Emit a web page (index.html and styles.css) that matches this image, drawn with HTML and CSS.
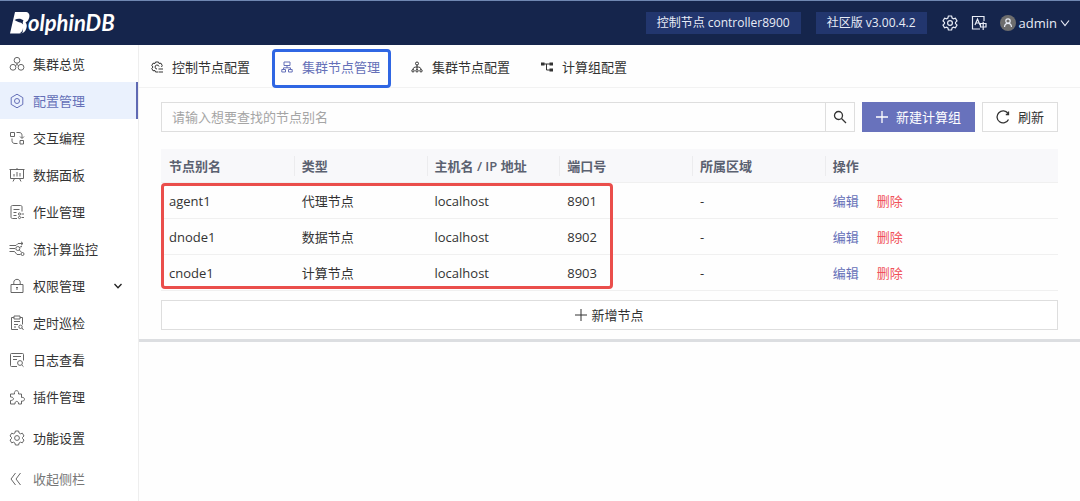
FILE: index.html
```html
<!doctype html>
<html lang="zh-CN">
<head>
	<meta charset="UTF-8">
	<title>DolphinDB</title>
	<link rel="stylesheet" href="styles.css">
</head>
<body>

	<header class="topbar">
		<a class="logo" href="#" aria-label="DolphinDB">
			<svg class="logo-mark" viewBox="0 0 20 22" width="20" height="22">
				<path fill="#fff" d="M5 0h10c3.500 0 5 2 4.300 5.200-.6 2.600-1.800 4.200-3.800 5.300 1.500 1.500 1.600 3.500.8 6-1 3.300-3.200 5-6.800 5H0z"/>
				<path fill="#15254c" d="M4.500 8c3-1.800 6.500-1.800 9 .5-1 1.500-.8 2.500-.3 4-1.700-1.600-2.700-2-4.200-2.200C7.500 9.500 6 9 4.500 8zM9.500 21.500c2.500-1.500 3.500-3.500 3.500-5.500 0 0 .5 3-1 5.500z"/>
			</svg>
			<span class="logo-text">olphinDB</span>
		</a>
		<div class="status">
			<span class="tag">控制节点 controller8900</span>
			<span class="tag">社区版 v3.00.4.2</span>
		</div>
		<button class="top-btn" aria-label="设置">
			<svg viewBox="0 0 16 16" width="16" height="16"><path d="M6.400 1h3.200l.5 2 1.300.8 2-.6L15 6l-1.500 1.400v1.200L15 10l-1.600 2.800-2-.6-1.300.8-.5 2H6.400l-.5-2-1.300-.8-2 .6L1 10l1.500-1.400V7.400L1 6l1.600-2.800 2 .6L5.900 3z"/><circle cx="8" cy="8" r="2.400"/></svg>
		</button>
		<button class="top-btn" aria-label="语言">
			<svg viewBox="0 0 16 16" width="16" height="16"><path d="M13 6V1.500H1.500v12.500H9M4 10l2.500-6L9 10M5 8h3M9.500 8.500h5.500v3.500H9.500zM12.200 6.800V15"/></svg>
		</button>
		<button class="user">
			<span class="avatar"><svg viewBox="0 0 16 16" width="16" height="16"><circle cx="8" cy="6" r="2.200"/><path d="M4.500 12c.2-2.400 1.500-3.600 3.500-3.600s3.300 1.200 3.500 3.600"/></svg></span>
			admin
			<svg viewBox="0 0 10 10" width="10" height="10"><path d="M1 2.500l4 5 4-5"/></svg>
		</button>
	</header>

	<div class="layout">
		<nav class="sidebar">
			<a class="side-item" href="#"><svg viewBox="0 0 16 16"><circle cx="8" cy="4.300" r="2.900"/><circle cx="4" cy="11.300" r="2.900"/><circle cx="12" cy="11.300" r="2.900"/><path d="M8 7.200v1.300l-1.500 1M8 8.500l1.500 1"/></svg>集群总览</a>
			<a class="side-item active" href="#"><svg viewBox="0 0 16 16"><path d="M8 1.200l5.800 3.400v6.800L8 14.800l-5.800-3.400V4.600z"/><circle cx="8" cy="8" r="2.500"/></svg>配置管理</a>
			<a class="side-item" href="#"><svg viewBox="0 0 16 16"><path d="M1.500 2.500h4v4h-4zM11 10.500h3.500V14H11zM7.500 2.500H10c2 0 3 1 3 3V8M11 6.500l2 2 2-2M8.500 13.500H6c-2 0-3-1-3-3V8.500"/></svg>交互编程</a>
			<a class="side-item" href="#"><svg viewBox="0 0 16 16"><path d="M.5 2.500h15M1.500 2.500v9h13v-9M5 9.500V7M8 9.500V5M11 9.500V6M5.500 11.500L4 14.500M10.500 11.500l1.500 3M8 1v1.500"/></svg>数据面板</a>
			<a class="side-item" href="#"><svg viewBox="0 0 16 16"><path d="M8 14.500H3.500c-1 0-1.500-.5-1.500-1.500V3c0-1 .5-1.500 1.500-1.500h8c1 0 1.500.5 1.500 1.500v4.500M4.500 5.500h6M4.500 8.500h3M4.500 11.500h3M12.500 10H15M12.500 13.500H15"/><circle cx="10.500" cy="10" r="1.100"/><circle cx="10.500" cy="13.500" r="1.100"/></svg>作业管理</a>
			<a class="side-item" href="#"><svg viewBox="0 0 16 16"><path d="M.5 4.500h6.500L9 2.500h5M12 .8l2 1.700-2 1.700M.5 7.500H6M.5 10.500h5l2.500 3h3.500"/><circle cx="8.800" cy="7.500" r="2"/><path d="M10.300 9l2.500 2.500M11 6l2-.5"/><circle cx="13.500" cy="13" r="1.500"/></svg>流计算监控</a>
			<a class="side-item" href="#"><svg viewBox="0 0 16 16"><path d="M2 6.500h12v8H2zM4.800 6.500V4.200c0-3.800 6.400-3.800 6.400 0v2.300M8 9v3M7 9.500h2"/></svg>权限管理<svg class="caret" viewBox="0 0 10 10"><path d="M1.500 3L5 6.800 8.500 3"/></svg></a>
			<a class="side-item" href="#"><svg viewBox="0 0 16 16"><path d="M9 14.500H2.500V2.500H5M11 2.500h2.500v7M5 1h6v3H5zM5 6.500h6M5 9.500h4M5 12h2M13 13l1.500 2"/><circle cx="11.500" cy="11.800" r="1.700"/></svg>定时巡检</a>
			<a class="side-item" href="#"><svg viewBox="0 0 16 16"><path d="M8 14.500H2.500c-.7 0-1-.3-1-1v-11c0-.7.3-1 1-1h11c.7 0 1 .3 1 1v6M4 4.500h8M4 7.500h4M12.800 13l1.700 1.700"/><circle cx="11" cy="11" r="2.400"/></svg>日志查看</a>
			<a class="side-item" href="#"><svg viewBox="0 0 16 16"><path d="M1.500 5H5.500c-1-4.500 5-4.500 4 0h3v3.500c4-1 4 4.500 0 3.500v3H9.500c.5-3.500-4-3.500-3.500 0H1.500v-3.500c4 0 4-3.500 0-3.500z"/></svg>插件管理</a>
			<a class="side-item spaced" href="#"><svg viewBox="0 0 16 16"><path d="M6.400 1h3.200l.5 2 1.300.8 2-.6L15 6l-1.500 1.400v1.200L15 10l-1.600 2.800-2-.6-1.300.8-.5 2H6.400l-.5-2-1.300-.8-2 .6L1 10l1.500-1.400V7.400L1 6l1.600-2.800 2 .6L5.900 3z"/><circle cx="8" cy="8" r="2.400"/></svg>功能设置</a>
			<button class="side-item spaced collapse"><svg viewBox="0 0 16 16"><path d="M6.500 2L2 8l4.500 6M11.500 2L7 8l4.500 6"/></svg>收起侧栏</button>
		</nav>

		<main class="main">
			<div class="tabs">
				<a class="tab" href="#"><svg viewBox="0 0 12 12"><path d="M7 11H4.500L4 9.500 2 9.800.8 7.500 2 6 .8 4.500 2 2.200l2 .3L4.500 1h3L8 2.500l2-.3 1.200 2.300L10.500 6M8 5.500A2 2 0 1 0 6 8M7.500 8H12M7.500 11H12"/></svg>控制节点配置</a>
				<a class="tab current" href="#"><svg viewBox="0 0 12 12"><path d="M3 1h6v3.500H3zM6 4.500V7M2.500 8.500V6.800h7v1.700M.8 8.500h3.700V11H.8zM7.500 8.500h3.700V11H7.500z"/></svg>集群节点管理</a>
				<a class="tab" href="#"><svg viewBox="0 0 12 12"><circle cx="6" cy="2.500" r="1.500"/><path d="M6 4v5M2 8.500C2 6.500 3.500 6 6 6s4 .5 4 2.500"/><circle cx="2" cy="9.800" r="1.200"/><circle cx="6" cy="9.800" r="1.200"/><circle cx="10" cy="9.800" r="1.200"/></svg>集群节点配置</a>
				<a class="tab" href="#"><svg viewBox="0 0 12 12"><path d="M1 3h10M5.500 3v6H11"/><path class="solid" d="M0 1.500h3.500v3H0zM8.500 1.500H12v3H8.500zM8.500 7.500H12v3H8.500z"/></svg>计算组配置</a>
			</div>

			<section class="content">
				<div class="toolbar">
					<form class="search">
						<input class="search-input" type="text" aria-label="节点别名" placeholder="请输入想要查找的节点别名">
						<button class="search-btn" type="button" aria-label="查找"><svg viewBox="0 0 14 14" width="14" height="14"><circle cx="5.500" cy="5.500" r="4"/><path d="M8.500 8.500l4.500 4.500"/></svg></button>
					</form>
					<button class="btn primary"><svg viewBox="0 0 12 12" width="12" height="12"><path d="M6 0v12M0 6h12"/></svg>新建计算组</button>
					<button class="btn"><svg viewBox="0 0 14 14" width="14" height="14"><path d="M12 3.500A6 6 0 1 0 12.500 9.500M12.500 1.500v3H9.800"/></svg>刷新</button>
				</div>

				<div class="table-wrap">
					<table class="nodes">
						<thead>
							<tr><th>节点别名</th><th>类型</th><th>主机名 / IP 地址</th><th>端口号</th><th>所属区域</th><th class="actions">操作</th></tr>
						</thead>
						<tbody>
							<tr><td>agent1</td><td>代理节点</td><td>localhost</td><td>8901</td><td>-</td><td><a class="edit" href="#">编辑</a><a class="delete" href="#">删除</a></td></tr>
							<tr><td>dnode1</td><td>数据节点</td><td>localhost</td><td>8902</td><td>-</td><td><a class="edit" href="#">编辑</a><a class="delete" href="#">删除</a></td></tr>
							<tr><td>cnode1</td><td>计算节点</td><td>localhost</td><td>8903</td><td>-</td><td><a class="edit" href="#">编辑</a><a class="delete" href="#">删除</a></td></tr>
						</tbody>
					</table>
					<div class="highlight"></div>
				</div>

				<button class="btn add"><svg viewBox="0 0 12 12" width="12" height="12"><path d="M6 0v12M0 6h12"/></svg>新增节点</button>
			</section>
		</main>
	</div>

</body>
</html>
```
FILE: styles.css
```css
* {
	box-sizing: border-box;
}
html, body {
	height: 100%;
	margin: 0;
}
body {
	display: flex;
	flex-direction: column;
	background-color: #fefefe;
	color: #333;
	font-family: "Open Sans", "Noto Sans CJK SC", sans-serif;
	font-size: 13px;
	line-height: 20px;
}
a {
	color: inherit;
	text-decoration: none;
}
button, input {
	font: inherit;
	color: inherit;
	margin: 0;
	padding: 0;
	border: 0;
	background: none;
}
svg {
	fill: none;
	stroke: currentColor;
	flex: none;
}

/* top bar */
.topbar {
	display: flex;
	align-items: center;
	height: 45px;
	flex: none;
	padding: 0 10px;
	border-top: 1px solid #6f87b2;
	background-color: #15254c;
	color: #e8ecf6;
}
.topbar svg {
	stroke-width: 1.2;
}
.logo {
	display: flex;
	align-items: center;
	margin-right: auto;
	color: #fff;
}
.topbar .logo-mark {
	stroke: none;
}
.logo-text {
	margin-left: -2px;
	font-family: Lato, "Liberation Sans", sans-serif;
	font-size: 22px;
	font-style: italic;
	font-weight: bold;
	line-height: 30px;
}
.status {
	display: flex;
	gap: 15px;
	margin-right: 15px;
}
.tag {
	padding: 1px 11px;
	background-color: #22366e;
	font-size: 12px;
}
.top-btn {
	display: flex;
	margin-right: 13px;
}
.user {
	display: flex;
	align-items: center;
	gap: 3px;
}
.avatar {
	display: flex;
	border-radius: 50%;
	background-color: #6d6d6d;
}

/* side menu */
.layout {
	display: flex;
	flex: 1;
}
.sidebar {
	display: flex;
	flex-direction: column;
	width: 139px;
	flex: none;
	border-right: 1px solid #eee;
	background-color: #fff;
}
.side-item {
	display: flex;
	align-items: center;
	gap: 8px;
	height: 37px;
	padding: 0 15px 0 9px;
}
.side-item svg {
	width: 16px;
	height: 16px;
	color: #666;
}
.side-item .caret {
	width: 10px;
	height: 10px;
	margin-left: auto;
	color: #222;
	stroke-width: 1.3;
}
.side-item.active {
	border-right: 2px solid #5f69b3;
	background-color: #eaf1fd;
	color: #6570b8;
}
.side-item.active svg {
	color: #6570b8;
}
.side-item.spaced {
	margin-top: 4px;
}
.side-item.collapse {
	color: #777;
}

/* tabs */
.main {
	flex: 1;
	min-width: 0;
}
.tabs {
	display: flex;
	gap: 11px;
	height: 43px;
	padding-left: 3px;
	border-bottom: 1px solid #f2f2f2;
}
.tab {
	display: flex;
	align-items: center;
	gap: 9px;
	margin-top: 4px;
	padding: 0 8px 3px 6px;
	height: 39px;
	border: 3px solid transparent;
	border-radius: 4px;
}
.tab svg {
	width: 12px;
	height: 12px;
}
.tab.current {
	border-color: #2f66e3;
	color: #6570b8;
}
.solid {
	fill: currentColor;
	stroke: none;
}

/* node list */
.content {
	padding: 14px 22px 9px;
	border-bottom: 3px solid #dcdee1;
}
.toolbar {
	display: flex;
	gap: 7px;
}
.toolbar svg {
	stroke-width: 1.3;
}
.search {
	display: flex;
	flex: 1;
	border: 1px solid #dedede;
}
.search-input {
	flex: 1;
	min-width: 0;
	padding: 0 10px;
	outline: none;
}
.search-input::placeholder {
	color: #a5a5a5;
}
.search-btn {
	display: flex;
	align-items: center;
	justify-content: center;
	width: 29px;
	border-left: 1px solid #dedede;
}
.btn {
	display: flex;
	align-items: center;
	justify-content: center;
	gap: 8px;
	height: 30px;
	padding: 0 13px;
	border: 1px solid #dedede;
	background-color: #fff;
}
.btn.primary {
	border-color: #6872bc;
	background-color: #6872bc;
	color: #fff;
}
.table-wrap {
	position: relative;
	margin: 17px 0 9px;
}
.nodes {
	width: 100%;
	table-layout: fixed;
	border-collapse: separate;
	border-spacing: 0;
}
.nodes th {
	height: 34px;
	padding: 0 8px;
	border-bottom: 1px solid #f0f0f0;
	background-color: #f8f8fa;
	color: #5b6170;
	font-weight: 600;
	text-align: left;
}
/* short divider between the header cells */
.nodes th + th {
	background-image: linear-gradient(#ececee, #ececee);
	background-size: 1px 20px;
	background-repeat: no-repeat;
	background-position: left center;
}
.nodes th.actions {
	width: 26%;
}
.nodes td {
	height: 36px;
	padding: 0 8px;
	border-bottom: 1px solid #f0f0f0;
}
.edit {
	margin-right: 18px;
	color: #6570b8;
}
.delete {
	color: #f0525a;
}
.highlight {
	position: absolute;
	top: 34px;
	left: 0;
	width: calc(50% + 3px);
	bottom: 2px;
	border: 3px solid #ea4e4b;
	border-radius: 4px;
	pointer-events: none;
}
.btn.add {
	width: 100%;
	gap: 4px;
}
```
